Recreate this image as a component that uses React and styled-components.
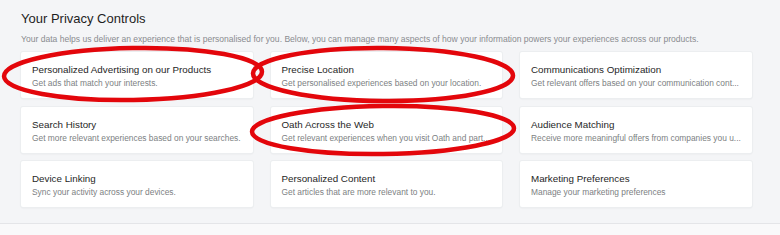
import React from 'react';
import styled, { createGlobalStyle } from 'styled-components';

// texts are kept the way the page shows them, including its "..." cuts
const controls = [
  { title: 'Personalized Advertising on our Products', text: 'Get ads that match your interests.' },
  { title: 'Precise Location', text: 'Get personalised experiences based on your location.' },
  { title: 'Communications Optimization', text: 'Get relevant offers based on your communication cont...' },
  { title: 'Search History', text: 'Get more relevant experiences based on your searches.' },
  { title: 'Oath Across the Web', text: 'Get relevant experiences when you visit Oath and part...' },
  { title: 'Audience Matching', text: 'Receive more meaningful offers from companies you u...' },
  { title: 'Device Linking', text: 'Sync your activity across your devices.' },
  { title: 'Personalized Content', text: 'Get articles that are more relevant to you.' },
  { title: 'Marketing Preferences', text: 'Manage your marketing preferences' },
];

const GlobalStyle = createGlobalStyle`
  html, body {
    margin: 0;
    padding: 0;
    background: #fafafa;
  }
  body {
    font-family: 'Liberation Sans', Arial, sans-serif;
  }
`;

const App = () => (
  <>
    <GlobalStyle />
    <Page>
      <Section>
        <Heading>Your Privacy Controls</Heading>
        <Intro>
          Your data helps us deliver an experience that is personalised for you. Below, you can manage many
          aspects of how your information powers your experiences across our products.
        </Intro>
        <Grid>
          {controls.map(({ title, text }) => (
            <Card key={title}>
              <CardTitle>{title}</CardTitle>
              <CardText>{text}</CardText>
            </Card>
          ))}
        </Grid>
      </Section>
      <Footer />
      <Marks viewBox="0 0 780 235" aria-hidden="true">
        <ellipse cx="133" cy="74" rx="129" ry="26" transform="rotate(-1 133 74)" />
        <ellipse cx="383" cy="74.5" rx="130" ry="26.5" transform="rotate(0.5 383 74)" />
        <ellipse cx="383" cy="130" rx="131" ry="24" transform="rotate(-0.8 383 130)" />
      </Marks>
    </Page>
  </>
);

const Page = styled.div`
  position: relative;
  width: 780px;
  height: 235px;
  overflow: hidden;
`;

const Section = styled.section`
  background: #f4f5f7;
  border-bottom: 1px solid #e4e5e8;
  padding: 11px 28px 17px 21px;
  height: 224px;
  box-sizing: border-box;
`;

const Heading = styled.h2`
  margin: 0;
  font-size: 13px;
  font-weight: 400;
  color: #1e1e1e;
  line-height: 15px;
`;

const Intro = styled.p`
  margin: 7px 0 0;
  font-size: 8.55px;
  line-height: 12px;
  color: #8a8c90;
  white-space: nowrap;
`;

const Grid = styled.div`
  display: grid;
  grid-template-columns: repeat(3, 231.5px);
  grid-auto-rows: 46px;
  column-gap: 18px;
  row-gap: 8.5px;
  margin-top: 7px;
`;

const Card = styled.div`
  background: #ffffff;
  border-radius: 2px;
  box-shadow: 0 0 0 1px #eceef0, 0 1px 2px rgba(0, 0, 0, 0.08);
  padding: 11px 2px 0 11px;
  box-sizing: border-box;
  min-width: 0;
`;

const CardTitle = styled.div`
  font-size: 9.8px;
  line-height: 13px;
  color: #262626;
  white-space: nowrap;
`;

const CardText = styled.div`
  margin-top: 1px;
  font-size: 8.4px;
  line-height: 12px;
  color: #7d7f83;
  white-space: nowrap;
`;

const Footer = styled.div`
  height: 11px;
  background: #f9f9fa;
`;

const Marks = styled.svg`
  position: absolute;
  inset: 0;
  width: 780px;
  height: 235px;
  pointer-events: none;

  & ellipse {
    fill: none;
    stroke: #e3060b;
    stroke-width: 4.5;
  }
`;

export default App;
